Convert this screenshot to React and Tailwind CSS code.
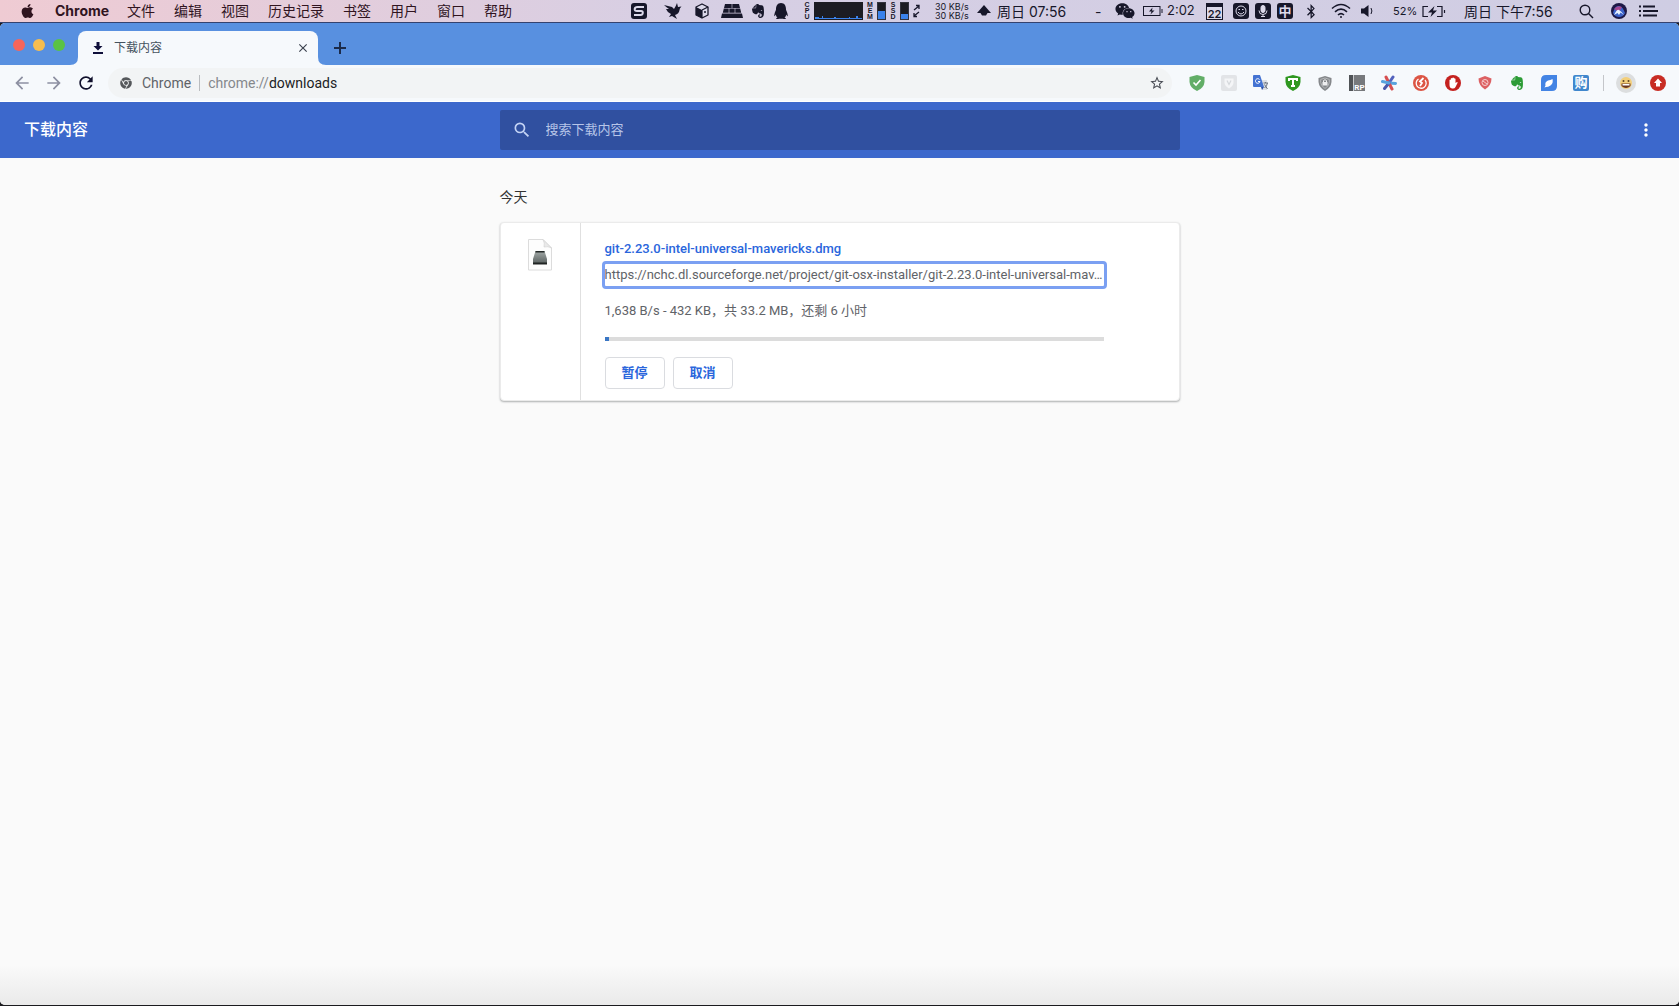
import React from 'react'
import { FaApple, FaEvernote, FaQq, FaWeixin, FaChrome, FaBluetoothB } from 'react-icons/fa'
import { MdArrowBack, MdArrowForward, MdRefresh, MdStarBorder, MdSearch, MdMoreVert, MdClose } from 'react-icons/md'

const MENUS = ['文件', '编辑', '视图', '历史记录', '书签', '用户', '窗口', '帮助']

const FILE_NAME = 'git-2.23.0-intel-universal-mavericks.dmg'
const FILE_URL = `https://nchc.dl.sourceforge.net/project/git-osx-installer/${FILE_NAME}`
const URL_LIMIT = 88

function shorten(text, limit) {
  return text.length > limit ? `${text.slice(0, limit)}…` : text
}

function StackedLabel({ text }) {
  return (
    <span className="w-[6px] flex flex-col items-center text-[7px] leading-[6px] font-bold font-['Liberation_Sans',sans-serif]">
      {text.split('').map((letter, i) => (
        <span key={i}>{letter}</span>
      ))}
    </span>
  )
}

function Gauge({ percent }) {
  return (
    <span className="w-[9px] h-[18px] bg-[#1c1c22] border border-[#33333d] flex flex-col justify-end">
      <span className="bg-[#3b82ea]" style={{ height: `${percent}%` }}></span>
    </span>
  )
}

function StatusIcons() {
  return (
    <div className="ml-auto pr-[21px] flex items-center h-full shrink-0">
      {/* Sogou */}
      <svg className="w-4 h-4" viewBox="0 0 16 16">
        <rect width="16" height="16" rx="3" fill="#17172a" />
        <path d="M13 4H6.500Q4 4 3.700 6T6 8H10Q12 8 11.800 10T9.500 12H3" fill="none" stroke="#dcd9ea" strokeWidth="2" />
      </svg>
      {/* Bird */}
      <svg className="w-[18px] h-[18px] ml-[17px] mr-px" viewBox="0 0 18 18">
        <path d="M0 3L8 5L10 7Q12 4 13 1L14 5L17.5 4.500Q15.500 6 15.500 8Q15 12 11 13L13 17L8 14L5 15L7 12Q3 10 2 7L5 7Q2 5 0 3Z" fill="#17172a" />
      </svg>
      {/* Cube */}
      <svg className="w-[14px] h-4 ml-3" viewBox="0 0 14 16">
        <path d="M7 1L13 4V12L7 15L1 12V4Z" fill="#dcd9ea" stroke="#17172a" strokeWidth="1.3" strokeLinejoin="round" />
        <path d="M1 4L7 7V15L1 12Z" fill="#17172a" />
        <path d="M7 7L13 4M7 7V15" stroke="#17172a" strokeWidth="1.200" />
        <circle cx="10" cy="9" r="1" fill="#17172a" />
      </svg>
      {/* Bricks */}
      <svg className="w-[22px] h-4 ml-3" viewBox="0 0 22 16">
        <path d="M4 1H10.700V5H3ZM11.300 1H18L19 5H11.300ZM2.800 5.600H7.700V9.800H1.800ZM8.300 5.600H13.700V9.800H8.300ZM14.300 5.600H19.200L20.200 9.800H14.300ZM1 10.500H21L22 15H0Z" fill="#17172a" />
      </svg>
      <FaEvernote className="w-4 h-4 ml-[7px]" />
      <FaQq className="w-[14px] h-4 ml-2" />

      <div className="ml-[16px] flex items-center">
        <StackedLabel text="CPU" />
        <svg className="w-[49px] h-[18px] ml-1" viewBox="0 0 49 18">
          <rect width="49" height="18" fill="#1c1c22" />
          <path d="M1 17V15H5V16H8V14H9V16H20V15H22V16H35V15H36V16H42V14H44V16H48V17Z" fill="#3b82ea" />
        </svg>
        <span className="ml-1"><StackedLabel text="MEM" /></span>
        <span className="ml-1 flex"><Gauge percent={50} /></span>
        <span className="ml-1"><StackedLabel text="SSD" /></span>
        <span className="ml-1 flex"><Gauge percent={32} /></span>
        <svg className="w-[7px] h-[14px] ml-1" viewBox="0 0 7 14" fill="none" stroke="#17172a" strokeWidth="1.300">
          <path d="M1 6L6 2M3 1.500H6V5M6 8L1 12M1 9V12.500H4" />
        </svg>
      </div>

      <div className="ml-[15px] w-[36px] text-[9px] leading-[9px] whitespace-nowrap">
        <div>30 KB/s</div>
        <div>30 KB/s</div>
      </div>
      <svg className="w-[14px] h-[14px] ml-[6px]" viewBox="0 0 14 14">
        <path d="M7 1L14 9H10.500L9 11.500H5L3.500 9H0Z" fill="#17172a" />
      </svg>
      <span className="ml-[6px] w-[70px] text-[14px] whitespace-nowrap">周日 07:56</span>
      <span className="ml-[28px] w-2 text-[14px]">-</span>
      <FaWeixin className="w-5 h-5 ml-3" />
      <svg className="w-5 h-[12px] ml-2" viewBox="0 0 20 12" fill="none" stroke="#17172a">
        <rect x=".5" y="1.500" width="16.500" height="9" />
        <path d="M19 4V8" />
        <path d="M9.500 2.500L6 6.500H8.500L7.500 9.500L11.500 5.500H9Z" fill="#17172a" stroke="none" />
      </svg>
      <span className="ml-1 w-[31px] text-[13px] whitespace-nowrap">2:02</span>
      <svg className="w-[17px] h-[17px] ml-2" viewBox="0 0 17 17">
        <rect x=".5" y=".5" width="16" height="16" fill="#dcd9ea" stroke="#17172a" />
        <rect width="17" height="4" fill="#17172a" />
        <text x="8.500" y="14.500" textAnchor="middle" fontSize="11" fontWeight="600" fill="#17172a">22</text>
      </svg>
      <svg className="w-4 h-4 ml-[10px]" viewBox="0 0 16 16" fill="none" stroke="#dcd9ea">
        <rect width="16" height="16" rx="3" fill="#17172a" stroke="none" />
        <circle cx="8" cy="8" r="5" />
        <path d="M5 9Q8 13 11 9M5.500 6.500H7M9 6.500H10.500" />
      </svg>
      <svg className="w-4 h-4 ml-[6px]" viewBox="0 0 16 16" fill="none" stroke="#dcd9ea">
        <rect width="16" height="16" rx="3" fill="#17172a" stroke="none" />
        <rect x="6" y="2.500" width="4" height="7" rx="2" fill="#dcd9ea" />
        <path d="M4 7.500Q4 11.500 8 11.500T12 7.500M8 11.500V14M6 13.500H10" />
      </svg>
      <span className="w-4 h-4 ml-[6px] rounded-[3px] bg-[#17172a] text-[#dcd9ea] text-[13px] leading-4 font-bold text-center overflow-hidden">中</span>
      <FaBluetoothB className="w-[12px] h-[15px] ml-3" />
      <svg className="w-5 h-4 ml-[14px]" viewBox="0 0 20 16" fill="none" stroke="#17172a" strokeWidth="1.600">
        <path d="M1 5.500Q10 -2.500 19 5.500M4 8.800Q10 3.500 16 8.800M7 12Q10 9.300 13 12" />
        <circle cx="10" cy="14" r="1" fill="#17172a" stroke="none" />
      </svg>
      <svg className="w-[15px] h-[14px] ml-[9px]" viewBox="0 0 15 14">
        <path d="M1 4.500H4L8.500 1V13L4 9.500H1Z" fill="#17172a" />
        <path d="M11 4Q12.800 7 11 10" fill="none" stroke="#17172a" />
      </svg>
      <span className="ml-[18px] w-[26px] text-[11px] whitespace-nowrap">52%</span>
      <svg className="w-6 h-[13px] ml-[3px]" viewBox="0 0 24 13" fill="none" stroke="#17172a">
        <path d="M6 1.500H1V11.500H6M15 1.500H20V11.500H15M22.500 5V8" strokeWidth="1.200" />
        <path d="M12.500 1L6 7.500H10L8.500 12L15 5.500H11Z" fill="#17172a" stroke="none" />
      </svg>
      <span className="ml-[18px] w-[96px] text-[14px] whitespace-nowrap">周日 下午7:56</span>
      <svg className="w-[15px] h-[15px] ml-[19px] mr-px" viewBox="0 0 15 15" fill="none" stroke="#17172a" strokeWidth="1.400">
        <circle cx="6" cy="6" r="4.800" />
        <path d="M9.500 9.500L14 14" />
      </svg>
      {/* Siri */}
      <svg className="w-4 h-4 ml-4" viewBox="0 0 16 16">
        <circle cx="8" cy="8" r="8" fill="#1d1846" />
        <path d="M2 10Q4 2 8 3T14 10Q12 14 8 14T2 10Z" fill="#3c62c9" />
        <path d="M3 6Q6 2 11 4L8 9Z" fill="#a3478f" />
        <path d="M3 12Q6 6 8 7T13 12L9.500 9.500L8 12L6.500 10Z" fill="#e6f2ff" />
      </svg>
      <svg className="w-[19px] h-[12px] ml-3" viewBox="0 0 19 12" stroke="#17172a" strokeWidth="1.800">
        <path d="M0 1.500H2M4 1.500H16M0 6H2M4 6H19M0 10.500H2M4 10.500H18" />
      </svg>
    </div>
  )
}

function MenuBar() {
  return (
    <header className="h-[23px] shrink-0 flex items-center pl-[20px] border-b border-[#34426f] bg-linear-to-r from-[#efcbd3] via-[#d7cfe4] via-40% to-[#cfcde3] text-[#17172a] overflow-hidden">
      <FaApple className="w-[15px] h-4 text-[#30141f]" />
      <nav className="ml-5 flex items-center gap-[19px] text-[14px] leading-5 text-[#30141f] whitespace-nowrap">
        <span className="w-[53px] font-bold">Chrome</span>
        {MENUS.map((menu) => (
          <span key={menu}>{menu}</span>
        ))}
      </nav>
      <StatusIcons />
    </header>
  )
}

function TabStrip() {
  return (
    <div className="h-[42px] shrink-0 flex items-end bg-[#5890e0]">
      <div className="self-center flex gap-2 pt-[2px] pl-[13px] pr-[5px]">
        <button aria-label="关闭窗口" className="w-3 h-3 rounded-full bg-[#f5655b]"></button>
        <button aria-label="最小化" className="w-3 h-3 rounded-full bg-[#f6bd4f]"></button>
        <button aria-label="全屏" className="w-3 h-3 rounded-full bg-[#5ac245]"></button>
      </div>
      <svg className="w-2 h-2" viewBox="0 0 8 8">
        <path d="M8 0V8H0Q8 8 8 0Z" fill="#f6f9fc" />
      </svg>
      <div className="w-[240px] h-[34px] flex items-center rounded-t-lg bg-[#f6f9fc] pl-[14px] pr-2">
        <svg className="w-3 h-3" viewBox="0 0 12 12" fill="#0f0f3a">
          <path d="M4.500 0H7.500V4H10.500L6 8.500L1.500 4H4.500ZM1 10H11V12H1Z" />
        </svg>
        <span className="ml-[10px] text-[12px] text-[#45525f]">下载内容</span>
        <button aria-label="关闭标签页" className="ml-auto text-[#3c4350]">
          <MdClose className="w-[14px] h-[14px]" />
        </button>
      </div>
      <svg className="w-2 h-2" viewBox="0 0 8 8">
        <path d="M0 0V8H8Q0 8 0 0Z" fill="#f6f9fc" />
      </svg>
      <button aria-label="新标签页" className="h-[34px] ml-2 text-[#1b2b4a]">
        <svg className="w-3 h-3" viewBox="0 0 12 12">
          <path d="M6 0V12M0 6H12" stroke="currentColor" strokeWidth="2" />
        </svg>
      </button>
    </div>
  )
}

function Shield({ fill, children }) {
  return (
    <svg className="w-4 h-4" viewBox="0 0 16 16">
      <path d="M8 0L15.500 2V7Q15 13 8 16Q1 13 .5 7V2Z" fill={fill} />
      {children}
    </svg>
  )
}

function Extensions() {
  return (
    <div className="flex items-center gap-4">
      <Shield fill="#62ae67">
        <path d="M4.500 7.500L7 10L11.500 5" fill="none" stroke="#fff" strokeWidth="1.600" />
      </Shield>
      <svg className="w-4 h-4" viewBox="0 0 16 16">
        <rect width="16" height="16" rx="2" fill="#e2e4e7" />
        <path d="M3.500 3.500H12.500V8Q12 11 8 13.500Q4 11 3.500 8Z" fill="#f4f5f7" />
        <path d="M6 5.500L8 9.500L10 5.500" fill="none" stroke="#d5d8dc" strokeWidth="1.200" />
      </svg>
      <svg className="w-4 h-4" viewBox="0 0 16 16">
        <path d="M7 5H14V15H9Z" fill="#dde0e5" />
        <path d="M1 0H7L11 12H1Q0 12 0 11V1Q0 0 1 0Z" fill="#4473d2" />
        <path d="M8 12H11L9 15Z" fill="#2a50a8" />
        <path d="M6.500 4.500A2.300 2.300 0 1 0 7 6.500H5" fill="none" stroke="#fff" />
        <path d="M10.500 8H15M12.500 7V8M14.500 8Q14 11 11.500 13M11.500 9.500L14.500 14" fill="none" stroke="#6d7580" />
      </svg>
      <Shield fill="#2f9820">
        <path d="M4 6V4H12V6M8 4V11M6 11H10" fill="none" stroke="#fff" strokeWidth="2" />
      </Shield>
      <svg className="w-4 h-4" viewBox="0 0 16 16">
        <path d="M8 1L14.500 3V7Q14 12.500 8 16Q2 12.500 1.500 7V3Z" fill="#85888b" />
        <path d="M8 3L12.300 4.400V7.500Q12 11 8 13.500Q4 11 3.700 7.500V4.400Z" fill="none" stroke="#b4b6b8" />
        <rect x="5.500" y="7" width="5" height="3.500" fill="#eeeeef" />
        <path d="M6.500 7V5.500Q8 4 9.500 5.500V7" fill="none" stroke="#eeeeef" />
      </svg>
      <svg className="w-4 h-4" viewBox="0 0 16 16">
        <rect width="16" height="16" fill="#77797c" />
        <rect width="4" height="16" fill="#505356" />
        <path d="M4.500 0V16" stroke="#c9cbcd" />
        <text x="10.500" y="14.500" textAnchor="middle" fontSize="8" fontWeight="700" fill="#fff">RP</text>
      </svg>
      <svg className="w-4 h-4" viewBox="0 0 16 16" fill="none" strokeWidth="3" strokeLinecap="round">
        <path d="M8 8L5 2" stroke="#d64f50" />
        <path d="M8 8L12 2" stroke="#5262bd" />
        <path d="M8 8L14.500 8.500" stroke="#59a3dd" />
        <path d="M8 8L11 14" stroke="#d64f50" />
        <path d="M8 8L3.500 13.500" stroke="#4a58ab" />
        <path d="M8 8L1.500 6.500" stroke="#59a3dd" />
      </svg>
      <svg className="w-4 h-4" viewBox="0 0 16 16">
        <circle cx="8" cy="8" r="8" fill="#dc5544" />
        <path d="M5.500 4A5 5 0 1 0 12 5" fill="none" stroke="#fff" strokeWidth="1.300" />
        <path d="M10.500 3L7 6.500L9 8L7 11" fill="none" stroke="#fff" strokeWidth="1.800" />
      </svg>
      <svg className="w-4 h-4" viewBox="0 0 16 16">
        <circle cx="8" cy="8" r="8" fill="#c4211f" />
        <path d="M4.500 5Q5 4 5.800 5V3.500Q6.500 2.500 7.200 3.500V3Q8.300 2 9 3V3.500Q10 2.800 10.500 4V8L12 7Q13 7.200 12.500 8L10.500 12Q9.500 14 7 13.500Q4.500 13 4.500 10Z" fill="#fff" />
      </svg>
      <svg className="w-4 h-4" viewBox="0 0 16 16">
        <path d="M8 1L14.500 3.500Q14.500 10.500 8 14.500Q1.500 10.500 1.500 3.500Z" fill="#dc6163" />
        <circle cx="8" cy="7.500" r="3" fill="none" stroke="#f6cfcf" />
        <path d="M6 6L10 9" stroke="#f6cfcf" />
      </svg>
      <FaEvernote className="w-4 h-4 text-[#2c9c36]" />
      <svg className="w-4 h-4" viewBox="0 0 16 16">
        <path d="M5 0H16V11Q16 16 11 16H0V5Q0 0 5 0Z" fill="#4384e4" />
        <path d="M11.500 4Q12.500 8.500 9.500 10.500Q7 12 5 12L3.500 12.500L4.500 10.500Q3.500 7 7 5.500Q9.500 5 11.500 4Z" fill="#fff" />
      </svg>
      <span className="w-4 h-4 rounded-[2px] bg-[#4087cd] text-white text-[13px] leading-4 font-bold text-center overflow-hidden">购</span>
    </div>
  )
}

function Toolbar() {
  return (
    <div className="h-[37px] shrink-0 flex items-center bg-[#f6f9fc] border-b border-white pl-3 pr-[13px]">
      <button aria-label="后退" className="text-[#8d90a2]"><MdArrowBack className="w-5 h-5" /></button>
      <button aria-label="前进" className="ml-3 text-[#8d90a2]"><MdArrowForward className="w-5 h-5" /></button>
      <button aria-label="重新加载" className="ml-3 text-[#10102c]"><MdRefresh className="w-5 h-5" /></button>
      <div className="ml-3 h-[30px] flex-1 min-w-0 flex items-center rounded-full bg-[#f2f4f5] pl-3 pr-[7px] text-[14px] whitespace-nowrap">
        <FaChrome className="w-3 h-3 text-[#55585b]" />
        <span className="ml-[10px] text-[#5f6368]">Chrome</span>
        <span className="w-px h-4 mx-2 bg-[#b9bcbf]"></span>
        <span className="text-[#85888c]">chrome://<span className="text-[#202124]">downloads</span></span>
        <button aria-label="为此网页添加书签" className="ml-auto text-[#4a4d55]"><MdStarBorder className="w-4 h-4" /></button>
      </div>
      <div className="ml-[17px] flex items-center">
        <Extensions />
        <span className="w-px h-4 ml-[14px] bg-[#c4c6ca]"></span>
        <svg className="w-5 h-5 ml-3" viewBox="0 0 20 20">
          <circle cx="10" cy="10" r="10" fill="#dcdedf" />
          <circle cx="10" cy="10" r="6" fill="#f3cf7a" />
          <path d="M5.500 10.500H14.500V13Q10 17 5.500 13Z" fill="#6b3720" />
          <path d="M6.500 11H13.500V12.500H6.500Z" fill="#fff" />
          <circle cx="7.500" cy="8" r="1" fill="#5c4320" />
          <circle cx="12.500" cy="8" r="1" fill="#5c4320" />
        </svg>
        <svg className="w-4 h-4 ml-[14px]" viewBox="0 0 16 16">
          <circle cx="8" cy="8" r="8" fill="#c82d24" />
          <path d="M8 3.500L12 8H10V11.500H6V8H4Z" fill="#fff" />
        </svg>
      </div>
    </div>
  )
}

function DownloadsHeader() {
  return (
    <div className="h-14 shrink-0 grid grid-cols-[1fr_minmax(0,680px)_1fr] items-center bg-[#3c68cc] text-white">
      <h1 className="pl-6 text-[16px] font-medium">下载内容</h1>
      <label className="h-10 flex items-center rounded-[2px] bg-[#3050a0] pl-3">
        <MdSearch className="w-5 h-5 text-[#c3d3f5]" />
        <input
          type="search"
          aria-label="搜索下载内容"
          placeholder="搜索下载内容"
          className="ml-[14px] flex-1 min-w-0 bg-transparent outline-none text-[13px] placeholder:text-[#b7c5e8]"
        />
      </label>
      <button aria-label="更多操作" className="justify-self-end mr-[23px]">
        <MdMoreVert className="w-5 h-5" />
      </button>
    </div>
  )
}

function FileIcon() {
  return (
    <svg className="w-6 h-8" viewBox="0 0 24 32">
      <defs>
        <linearGradient id="drive" x1="0" y1="0" x2="0" y2="1">
          <stop offset="0" stopColor="#a3aaa8" />
          <stop offset="1" stopColor="#5e6564" />
        </linearGradient>
      </defs>
      <path d="M.5 .5H15L23.500 9V31H.5Z" fill="#fdfdfd" stroke="#dcdcdc" />
      <path d="M15 .5Q17 4 16 8Q20 7 23.500 9Z" fill="#e9e9e9" stroke="#d2d2d2" strokeWidth=".6" />
      <path d="M7.500 12H16.500L19 20V24H5V20Z" fill="url(#drive)" />
      <path d="M7.500 12H16.500V13.500H7.500Z" fill="#232827" />
      <path d="M5 23.500H19V25.500H5Z" fill="#202423" />
    </svg>
  )
}

function DownloadItem({ percent }) {
  return (
    <div className="mt-[14px] flex rounded bg-white border border-[#ebebeb] shadow-[0_1px_2px_rgba(60,64,67,0.4)] text-[13px]">
      <div className="w-[80px] shrink-0 flex justify-center pt-4 border-r border-[#e0e0e0]">
        <FileIcon />
      </div>
      <div className="flex-1 min-w-0 pl-6 pr-[75px] pt-4 pb-[11px]">
        <a href="#file" className="block w-fit leading-5 font-medium text-[#2a66dc]">{FILE_NAME}</a>
        <a
          href="#source"
          title={FILE_URL}
          className="block mt-[5px] py-px leading-5 whitespace-nowrap text-[#5f6368] rounded-[1px] outline-3 outline-[#7ba0f2]"
        >
          {shorten(FILE_URL, URL_LIMIT)}
        </a>
        <p className="mt-[15px] leading-5 text-[#5f6368]">1,638 B/s - 432 KB，共 33.2 MB，还剩 6 小时</p>
        <div className="mt-4 h-1 bg-[#dcdcdc]">
          <div className="h-full bg-[#3a76c4]" style={{ width: `${percent}%` }}></div>
        </div>
        <div className="mt-4 flex gap-2 font-bold text-[#2a66dc]">
          <button className="w-[60px] h-8 rounded border border-[#dadce0]">暂停</button>
          <button className="w-[60px] h-8 rounded border border-[#dadce0]">取消</button>
        </div>
      </div>
    </div>
  )
}

export default function App() {
  return (
    <div className="min-h-screen flex flex-col bg-[#1b1b1f] font-['Inter','Noto_Sans_CJK_SC',sans-serif]">
      <MenuBar />
      <div className="flex-1 flex flex-col rounded-[5px] overflow-hidden mb-px bg-[#fafafa] font-['Roboto','Noto_Sans_CJK_SC',sans-serif]">
        <TabStrip />
        <Toolbar />
        <DownloadsHeader />
        <main className="flex-1 w-full max-w-[680px] mx-auto pt-7">
          <h2 className="text-[14px] leading-[22px] text-[#333]">今天</h2>
          <DownloadItem percent={1} />
        </main>
        <div className="h-10 shrink-0 bg-linear-to-b from-[#fafafa] to-[#eaeaea]"></div>
      </div>
    </div>
  )
}
